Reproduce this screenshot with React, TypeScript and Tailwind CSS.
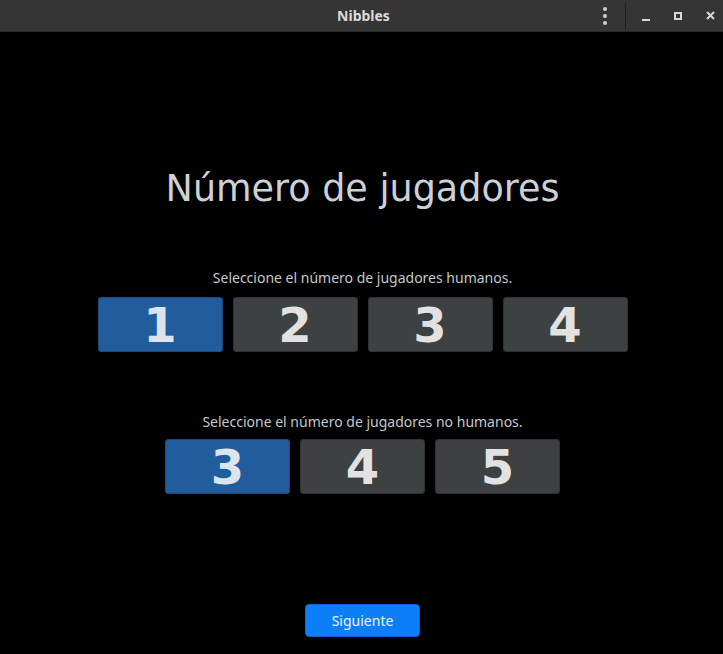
import { useState } from 'react';

const NumberButton = ({ value, active, onClick }: { value: number; active: boolean; onClick: () => void }) => (
  <button
    onClick={onClick}
    className={
      active
        ? 'w-[125px] h-[55px] rounded-[3px] border border-[#1a4a7e] bg-[#215d9c] text-[#dde4ee] text-[48px] font-bold leading-none flex items-center justify-center'
        : 'w-[125px] h-[55px] rounded-[3px] border border-[#2e3232] bg-[#3d4141] text-[#e2e2e2] text-[48px] font-bold leading-none flex items-center justify-center'
    }
    style={{ fontFamily: '"DejaVu Sans", sans-serif' }}
  >
    {value}
  </button>
);

export default function App() {
  const [humans, setHumans] = useState(1);
  const [bots, setBots] = useState(3);

  return (
    <div className="w-[723px] h-[654px] bg-black flex flex-col" style={{ fontFamily: '"Noto Sans", "Open Sans", sans-serif' }}>
      {/* title bar */}
      <div className="h-[32px] bg-[#353535] border-b border-[#2a2a2a] flex items-center relative shrink-0">
        <div className="flex-1 text-center text-[14px] font-bold text-[#dadada] pl-[4px]">Nibbles</div>
        <div className="absolute right-0 top-0 h-full flex items-center">
          <div className="w-[4px] flex flex-col gap-[3px] mr-[18px]">
            <span className="w-[4px] h-[4px] rounded-full bg-[#d0d0d0]" />
            <span className="w-[4px] h-[4px] rounded-full bg-[#d0d0d0]" />
            <span className="w-[4px] h-[4px] rounded-full bg-[#d0d0d0]" />
          </div>
          <div className="w-[1px] h-[26px] bg-[#1e1e1e] mr-[16px]" />
          <div className="w-[8px] h-[2px] bg-[#d8d8d8] mt-[8px] mr-[24px]" />
          <div className="w-[8px] h-[8px] border-2 border-[#d8d8d8] mr-[24px]" />
          <svg width="9" height="9" viewBox="0 0 9 9" className="mr-[8px]">
            <path d="M1 1 L8 8 M8 1 L1 8" stroke="#d8d8d8" strokeWidth="2" />
          </svg>
        </div>
      </div>

      {/* content */}
      <div className="flex-1 flex flex-col items-center pl-[2px]">
        <h1
          className="mt-[135px] text-[36.5px] leading-[44px] text-[#cdd1d6]"
          style={{ fontFamily: '"DejaVu Sans", sans-serif' }}
        >
          Número de jugadores
        </h1>

        <p className="mt-[58px] text-[14px] leading-[18px] text-[#c4c8cc]">Seleccione el número de jugadores humanos.</p>
        <div className="mt-[10px] flex gap-[10px]">
          {[1, 2, 3, 4].map((n) => (
            <NumberButton key={n} value={n} active={humans === n} onClick={() => setHumans(n)} />
          ))}
        </div>

        <p className="mt-[61px] text-[14px] leading-[18px] text-[#c4c8cc]">Seleccione el número de jugadores no humanos.</p>
        <div className="mt-[8px] flex gap-[10px]">
          {[3, 4, 5].map((n) => (
            <NumberButton key={n} value={n} active={bots === n} onClick={() => setBots(n)} />
          ))}
        </div>

        <button className="mt-[110px] w-[115px] h-[33px] rounded-[4px] border border-[#0866d0] bg-[#0b7ff5] text-[14px] text-[#eef4fc]">
          Siguiente
        </button>
      </div>
    </div>
  );
}
